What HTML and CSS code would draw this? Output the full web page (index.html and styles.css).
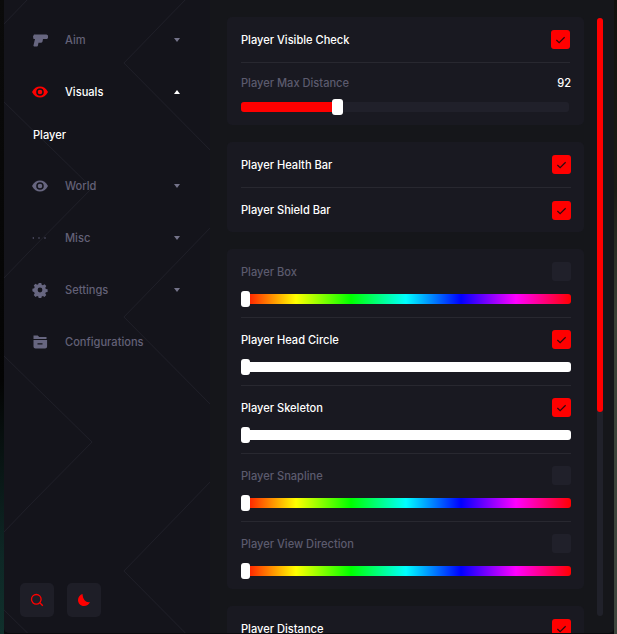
FILE: index.html
```html
<!DOCTYPE html>
<html lang="en">
<head>
<meta charset="utf-8">
<title>Player Visuals</title>
<link rel="stylesheet" href="styles.css">
</head>
<body>
<div class="app">
  <aside class="sidebar">
    <svg class="pattern" width="206" height="633" aria-hidden="true">
      <defs>
        <pattern id="lines" width="206" height="254" patternUnits="userSpaceOnUse">
          <path d="M0 24 23 0M181 0 120 63 206 150M0 102 88 188 23 254M206 228 181 254" fill="none" stroke="#1e1e27" stroke-width="1"/>
        </pattern>
      </defs>
      <rect width="206" height="633" fill="url(#lines)"/>
    </svg>
    <nav class="nav">
      <div class="item">
        <svg class="icon" viewBox="0 0 16 16"><path d="M2 2.500h12.500l1.500 1v2.500l-1 1H11l-.5 2.500c-.1.7-.6 1.200-1.300 1.200H6.500l-.7 3.300-.7.500H2l-.6-.8L3 7H1.500L1 4.500z"/></svg>
        <span class="label">Aim</span>
        <span class="caret"></span>
      </div>
      <div class="item active">
        <svg class="icon" viewBox="0 0 16 16"><path fill-rule="evenodd" d="M0 8c2-3.800 4.800-5.500 8-5.500s6 1.700 8 5.500c-2 3.800-4.800 5.500-8 5.500s-6-1.700-8-5.500zm8-3.800a3.800 3.800 0 1 0 0 7.600 3.800 3.800 0 0 0 0-7.600zm0 1.500a2.300 2.300 0 1 1 0 4.600 2.300 2.300 0 0 1 0-4.600z"/></svg>
        <span class="label">Visuals</span>
        <span class="caret up"></span>
      </div>
      <div class="sub">Player</div>
      <div class="item">
        <svg class="icon" viewBox="0 0 16 16"><path fill-rule="evenodd" d="M0 8c2-3.800 4.800-5.500 8-5.500s6 1.700 8 5.500c-2 3.800-4.800 5.500-8 5.500s-6-1.700-8-5.500zm8-3.800a3.800 3.800 0 1 0 0 7.600 3.800 3.800 0 0 0 0-7.600zm0 1.500a2.300 2.300 0 1 1 0 4.600 2.300 2.300 0 0 1 0-4.600z"/></svg>
        <span class="label">World</span>
        <span class="caret"></span>
      </div>
      <div class="item">
        <svg class="icon" viewBox="0 0 16 16"><circle cx="1.300" cy="8" r=".7"/><circle cx="7" cy="8" r=".7"/><circle cx="13" cy="8" r=".7"/></svg>
        <span class="label">Misc</span>
        <span class="caret"></span>
      </div>
      <div class="item">
        <svg class="icon" viewBox="0 0 16 16"><path fill-rule="evenodd" d="M6.700 1h2.600l.4 1.800 1.200.5 1.600-1 1.800 1.800-1 1.600.5 1.200 1.800.4v2.600l-1.800.4-.5 1.200 1 1.600-1.800 1.800-1.600-1-1.200.5-.4 1.800H6.700l-.4-1.800-1.200-.5-1.600 1-1.800-1.800 1-1.600-.5-1.200L.4 9.300V6.700l1.800-.4.5-1.200-1-1.600 1.800-1.800 1.600 1 1.200-.5zM8 5.600a2.400 2.400 0 1 0 0 4.800 2.400 2.400 0 0 0 0-4.800z"/></svg>
        <span class="label">Settings</span>
        <span class="caret"></span>
      </div>
      <div class="item">
        <svg class="icon" viewBox="0 0 16 16"><path fill-rule="evenodd" d="M1.500 1.500h4.200l1.500 1.500h7.300v2H1.500zM1.500 6h13.600v6.500c0 1.100-.9 2-2 2H3.500c-1.100 0-2-.9-2-2zM5.500 9.200v1.300h5V9.200z"/></svg>
        <span class="label">Configurations</span>
      </div>
    </nav>
    <div class="tools">
      <button class="tool" type="button" aria-label="Search">
        <svg width="14" height="14" viewBox="0 0 14 14" fill="none" stroke="#ff0000" stroke-width="1.300"><circle cx="6.300" cy="6.300" r="4.800"/><path d="M9.800 9.800 12.800 12.800"/></svg>
      </button>
      <button class="tool" type="button" aria-label="Theme">
        <svg width="14" height="14" viewBox="0 0 14 14" fill="#ff0000"><path d="M5.500 1C3 1.800 1 4 1 7c0 3.400 2.600 6 6 6 2.800 0 4.900-1.600 6-4-3.400.9-7-1.300-7.500-8z"/></svg>
      </button>
    </div>
  </aside>
  <main class="main">
    <div class="content">
      <section class="card">
        <div class="row toggle">
          <span class="name">Player Visible Check</span>
          <span class="check on"><svg viewBox="0 0 12 12"><path d="M1.500 6.500 4.500 9.500 10.500 3.500"/></svg></span>
        </div>
        <div class="row value">
          <div class="head"><span class="name dim">Player Max Distance</span><span class="num">92</span></div>
          <div class="track"><div class="fill"></div><span class="thumb mid"></span></div>
        </div>
      </section>
      <section class="card wide">
        <div class="row toggle">
          <span class="name">Player Health Bar</span>
          <span class="check on"><svg viewBox="0 0 12 12"><path d="M1.500 6.500 4.500 9.500 10.500 3.500"/></svg></span>
        </div>
        <div class="row toggle">
          <span class="name">Player Shield Bar</span>
          <span class="check on"><svg viewBox="0 0 12 12"><path d="M1.500 6.500 4.500 9.500 10.500 3.500"/></svg></span>
        </div>
      </section>
      <section class="card wide">
        <div class="row color">
          <div class="head"><span class="name dim">Player Box</span><span class="check"></span></div>
          <div class="bar rainbow"><span class="thumb"></span></div>
        </div>
        <div class="row color">
          <div class="head"><span class="name">Player Head Circle</span><span class="check on"><svg viewBox="0 0 12 12"><path d="M1.500 6.500 4.500 9.500 10.500 3.500"/></svg></span></div>
          <div class="bar white"><span class="thumb"></span></div>
        </div>
        <div class="row color">
          <div class="head"><span class="name">Player Skeleton</span><span class="check on"><svg viewBox="0 0 12 12"><path d="M1.500 6.500 4.500 9.500 10.500 3.500"/></svg></span></div>
          <div class="bar white"><span class="thumb"></span></div>
        </div>
        <div class="row color">
          <div class="head"><span class="name dim">Player Snapline</span><span class="check"></span></div>
          <div class="bar rainbow"><span class="thumb"></span></div>
        </div>
        <div class="row color">
          <div class="head"><span class="name dim">Player View Direction</span><span class="check"></span></div>
          <div class="bar rainbow"><span class="thumb"></span></div>
        </div>
      </section>
      <section class="card wide">
        <div class="row toggle">
          <span class="name">Player Distance</span>
          <span class="check on"><svg viewBox="0 0 12 12"><path d="M1.500 6.500 4.500 9.500 10.500 3.500"/></svg></span>
        </div>
      </section>
    </div>
    <div class="scrollbar"><div class="scroll-thumb"></div></div>
  </main>
</div>
</body>
</html>
```
FILE: styles.css
```css
* { box-sizing: border-box; }
html, body { height: 100%; }
body {
  margin: 0;
  overflow: hidden;
  background:
    linear-gradient(180deg, #0b0b0b 0, #040404 60%, #0e2826 88%, #10302c 100%) left top / 4px 100% no-repeat,
    linear-gradient(180deg, #11110d 0, #1a1c15 30%, #394136 50%, #3e463e 100%) right top / 3px 100% no-repeat,
    #0a0a0d;
  font-family: Inter, "Liberation Sans", sans-serif;
}
.app {
  display: flex;
  width: 610px;
  height: 633px;
  margin-left: 4px;
  background: #15161a;
  border-radius: 0 0 5px 5px;
  overflow: hidden;
}
.sidebar {
  position: relative;
  flex: none;
  width: 206px;
  display: flex;
  flex-direction: column;
  background: #14141b;
}
.pattern { position: absolute; left: 0; top: 0; }
.nav {
  position: relative;
  display: flex;
  flex-direction: column;
  padding-top: 14px;
}
.item {
  display: flex;
  align-items: center;
  height: 52px;
  padding-left: 28px;
  color: #636177;
  font-size: 11.100px;
  font-weight: 500;
}
.item.active { color: #ffffff; }
.icon { width: 16px; height: 16px; flex: none; fill: #676680; }
.item.active .icon { fill: #ff0000; }
.label { margin-left: 17px; flex: 1; }
.caret {
  width: 0;
  height: 0;
  margin-right: 30px;
  border-left: 3.500px solid transparent;
  border-right: 3.500px solid transparent;
  border-top: 4px solid #747389;
}
.caret.up { border-top: 0; border-bottom: 4px solid #ffffff; }
.sub {
  height: 42px;
  padding: 10px 0 0 29px;
  color: #ffffff;
  font-size: 11.100px;
  font-weight: 500;
  line-height: 14px;
}
.tools {
  position: relative;
  display: flex;
  gap: 13px;
  margin-top: auto;
  padding: 0 0 16px 16px;
}
.tool {
  width: 34px;
  height: 34px;
  padding: 0;
  display: flex;
  align-items: center;
  justify-content: center;
  border: 0;
  border-radius: 5px;
  background: #1e1e27;
}
.main {
  flex: 1;
  display: flex;
  min-width: 0;
  padding: 17px 0 0 17px;
}
.content {
  width: 357px;
  flex: none;
  display: flex;
  flex-direction: column;
  gap: 17px;
}
.card {
  flex: none;
  padding: 0 14px;
  background: #191921;
  border-radius: 5px;
}
.card.wide { padding-right: 13px; }
.name { color: #ffffff; font-size: 11.100px; font-weight: 500; line-height: 14px; }
.name.dim { color: #5c5b6e; }
.row + .row { border-top: 1px solid #282830; }
.toggle { display: flex; align-items: center; justify-content: space-between; height: 45px; }
.head { display: flex; align-items: center; justify-content: space-between; height: 19px; }
.value { height: 63px; padding-top: 10px; }
.num { color: #ffffff; font-size: 11.100px; font-weight: 500; margin-right: -1px; }
.color { height: 68px; padding-top: 12px; }
.color:first-child { padding-top: 13px; }
.check {
  width: 19px;
  height: 19px;
  flex: none;
  display: flex;
  align-items: center;
  justify-content: center;
  background: #20202a;
  border-radius: 3px;
}
.check.on { background: #ff0000; }
.check svg { width: 11px; height: 11px; fill: none; stroke: #2a0a10; stroke-width: 1.300; }
.track {
  position: relative;
  height: 10px;
  margin: 10px 1px 0 0;
  background: #20202a;
  border-radius: 3px;
}
.fill { width: 96px; height: 10px; background: #ff0000; border-radius: 3px; }
.bar {
  position: relative;
  height: 10px;
  margin-top: 13px;
  border-radius: 3px;
}
.rainbow { background: linear-gradient(90deg, #f00, #ff0, #0f0, #0ff, #00f, #f0f, #f00); }
.white { background: #ffffff; }
.thumb {
  position: absolute;
  left: 0;
  top: -3px;
  width: 9px;
  height: 16px;
  background: #ffffff;
  border-radius: 3px;
}
.thumb.mid { left: 91px; width: 11px; }
.scrollbar {
  flex: none;
  width: 6px;
  height: 598px;
  margin: 1px 0 0 13px;
  background: #20212a;
  border-radius: 3px;
}
.scroll-thumb { height: 394px; background: #ff0000; border-radius: 3px; }
```
